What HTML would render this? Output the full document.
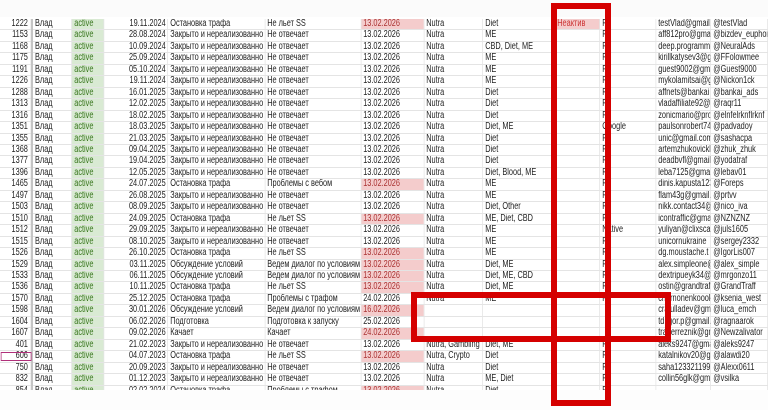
<!DOCTYPE html>
<html><head><meta charset="utf-8"><style>
body{margin:0;width:768px;height:410px;overflow:hidden;background:#fff;font-family:"Liberation Sans",Arial,sans-serif;font-size:9.8px;color:#222;position:relative}
table{position:absolute;left:0;top:19px;border-collapse:collapse;table-layout:fixed;width:1024px;transform:scaleX(0.75);transform-origin:0 0}
td{height:10.45px;padding:0 2.5px;border-right:1px solid #e4e4e4;border-bottom:1px solid #e4e4e4;white-space:nowrap;overflow:hidden;line-height:10.45px}
td.n{text-align:right;border-right:3px solid #c4c4c4;padding-right:4px}
td.g{background:#d9ead3;color:#38761d}
td.d{text-align:right}
td.p{background:#f4cccc;color:#a33}
.top{position:absolute;left:0;top:0;width:768px;height:17px;background:#fbfbfb}
.bot{position:absolute;left:0;top:390px;width:768px;height:20px;background:#fdfdfd}
.r{position:absolute;border:6px solid #d50000;box-sizing:border-box}
.sel{outline:1.5px solid #b0307a;outline-offset:-2px}
</style></head><body>
<div class="top"></div>
<table>
<colgroup><col style="width:42.7px"><col style="width:53.3px"><col style="width:42.7px"><col style="width:85.3px"><col style="width:129.3px"><col style="width:128px"><col style="width:84px"><col style="width:78.7px"><col style="width:96px"><col style="width:60px"><col style="width:74.7px"><col style="width:73.3px"><col style="width:76px"></colgroup>
<tr><td class="n">1222</td><td>Влад</td><td class="g">active</td><td class="d">19.11.2024</td><td>Остановка трафа</td><td>Не льет SS</td><td class="p">13.02.2026</td><td>Nutra</td><td>Diet</td><td class="p" style="color:#c33">Неактив</td><td>F</td><td>testVlad@gmail.</td><td>@testVlad</td></tr>
<tr><td class="n">1153</td><td>Влад</td><td class="g">active</td><td class="d">28.08.2024</td><td>Закрыто и нереализованно</td><td>Не отвечает</td><td>13.02.2026</td><td>Nutra</td><td>ME</td><td></td><td>F</td><td>aff812pro@gmai</td><td>@bizdev_euphor</td></tr>
<tr><td class="n">1168</td><td>Влад</td><td class="g">active</td><td class="d">10.09.2024</td><td>Закрыто и нереализованно</td><td>Не отвечает</td><td>13.02.2026</td><td>Nutra</td><td>CBD, Diet, ME</td><td></td><td>F</td><td>deep.programme</td><td>@NeuralAds</td></tr>
<tr><td class="n">1175</td><td>Влад</td><td class="g">active</td><td class="d">25.09.2024</td><td>Закрыто и нереализованно</td><td>Не отвечает</td><td>13.02.2026</td><td>Nutra</td><td>ME</td><td></td><td>F</td><td>kirillkatysev3@g</td><td>@FFolowmee</td></tr>
<tr><td class="n">1191</td><td>Влад</td><td class="g">active</td><td class="d">05.10.2024</td><td>Закрыто и нереализованно</td><td>Не отвечает</td><td>13.02.2026</td><td>Nutra</td><td>ME</td><td></td><td>F</td><td>guest9002@gma</td><td>@Guest9000</td></tr>
<tr><td class="n">1226</td><td>Влад</td><td class="g">active</td><td class="d">19.11.2024</td><td>Закрыто и нереализованно</td><td>Не отвечает</td><td>13.02.2026</td><td>Nutra</td><td>ME</td><td></td><td>F</td><td>mykolamitsai@g</td><td>@Nickon1ck</td></tr>
<tr><td class="n">1288</td><td>Влад</td><td class="g">active</td><td class="d">16.01.2025</td><td>Закрыто и нереализованно</td><td>Не отвечает</td><td>13.02.2026</td><td>Nutra</td><td>Diet</td><td></td><td>F</td><td>affnets@bankai</td><td>@bankai_ads</td></tr>
<tr><td class="n">1313</td><td>Влад</td><td class="g">active</td><td class="d">12.02.2025</td><td>Закрыто и нереализованно</td><td>Не отвечает</td><td>13.02.2026</td><td>Nutra</td><td>Diet</td><td></td><td>F</td><td>vladaffiliate92@</td><td>@raqr11</td></tr>
<tr><td class="n">1316</td><td>Влад</td><td class="g">active</td><td class="d">18.02.2025</td><td>Закрыто и нереализованно</td><td>Не отвечает</td><td>13.02.2026</td><td>Nutra</td><td>Diet</td><td></td><td>F</td><td>zonicmario@pro</td><td>@elnfelrknflrknf</td></tr>
<tr><td class="n">1351</td><td>Влад</td><td class="g">active</td><td class="d">18.03.2025</td><td>Закрыто и нереализованно</td><td>Не отвечает</td><td>13.02.2026</td><td>Nutra</td><td>Diet, ME</td><td></td><td>Google</td><td>paulsonrobert74</td><td>@padvadoy</td></tr>
<tr><td class="n">1355</td><td>Влад</td><td class="g">active</td><td class="d">21.03.2025</td><td>Закрыто и нереализованно</td><td>Не отвечает</td><td>13.02.2026</td><td>Nutra</td><td>Diet</td><td></td><td>F</td><td>unic@gmail.com</td><td>@sashacpa</td></tr>
<tr><td class="n">1368</td><td>Влад</td><td class="g">active</td><td class="d">09.04.2025</td><td>Закрыто и нереализованно</td><td>Не отвечает</td><td>13.02.2026</td><td>Nutra</td><td>Diet</td><td></td><td>F</td><td>artemzhukovickl</td><td>@zhuk_zhuk</td></tr>
<tr><td class="n">1377</td><td>Влад</td><td class="g">active</td><td class="d">19.04.2025</td><td>Закрыто и нереализованно</td><td>Не отвечает</td><td>13.02.2026</td><td>Nutra</td><td>Diet</td><td></td><td>F</td><td>deadbvfl@gmail</td><td>@yodatraf</td></tr>
<tr><td class="n">1396</td><td>Влад</td><td class="g">active</td><td class="d">12.05.2025</td><td>Закрыто и нереализованно</td><td>Не отвечает</td><td>13.02.2026</td><td>Nutra</td><td>Diet, Blood, ME</td><td></td><td>F</td><td>leba7125@gmai</td><td>@lebav01</td></tr>
<tr><td class="n">1465</td><td>Влад</td><td class="g">active</td><td class="d">24.07.2025</td><td>Остановка трафа</td><td>Проблемы с вебом</td><td class="p">13.02.2026</td><td>Nutra</td><td>ME</td><td></td><td>F</td><td>dinis.kapusta123</td><td>@Foreps</td></tr>
<tr><td class="n">1497</td><td>Влад</td><td class="g">active</td><td class="d">26.08.2025</td><td>Закрыто и нереализованно</td><td>Не отвечает</td><td>13.02.2026</td><td>Nutra</td><td>ME</td><td></td><td>F</td><td>flam43g@gmail.</td><td>@prtvv</td></tr>
<tr><td class="n">1503</td><td>Влад</td><td class="g">active</td><td class="d">08.09.2025</td><td>Закрыто и нереализованно</td><td>Не отвечает</td><td>13.02.2026</td><td>Nutra</td><td>Diet, Other</td><td></td><td>F</td><td>nikk.contact34@</td><td>@nico_iva</td></tr>
<tr><td class="n">1510</td><td>Влад</td><td class="g">active</td><td class="d">24.09.2025</td><td>Остановка трафа</td><td>Не льет SS</td><td class="p">13.02.2026</td><td>Nutra</td><td>ME, Diet, CBD</td><td></td><td>F</td><td>icontraffic@gma</td><td>@NZNZNZ</td></tr>
<tr><td class="n">1512</td><td>Влад</td><td class="g">active</td><td class="d">29.09.2025</td><td>Закрыто и нереализованно</td><td>Не отвечает</td><td>13.02.2026</td><td>Nutra</td><td>ME</td><td></td><td>Native</td><td>yuliyan@clixscal</td><td>@juls1605</td></tr>
<tr><td class="n">1515</td><td>Влад</td><td class="g">active</td><td class="d">08.10.2025</td><td>Закрыто и нереализованно</td><td>Не отвечает</td><td>13.02.2026</td><td>Nutra</td><td>ME</td><td></td><td>F</td><td>unicornukraine</td><td>@sergey2332</td></tr>
<tr><td class="n">1526</td><td>Влад</td><td class="g">active</td><td class="d">26.10.2025</td><td>Остановка трафа</td><td>Не льет SS</td><td class="p">13.02.2026</td><td>Nutra</td><td>ME</td><td></td><td>F</td><td>dg.moustache.t</td><td>@IgorLis007</td></tr>
<tr><td class="n">1529</td><td>Влад</td><td class="g">active</td><td class="d">03.11.2025</td><td>Обсуждение условий</td><td>Ведем диалог по условиям</td><td class="p">13.02.2026</td><td>Nutra</td><td>Diet, ME</td><td></td><td>F</td><td>alex.simpleone@</td><td>@alex_simple</td></tr>
<tr><td class="n">1533</td><td>Влад</td><td class="g">active</td><td class="d">06.11.2025</td><td>Обсуждение условий</td><td>Ведем диалог по условиям</td><td class="p">13.02.2026</td><td>Nutra</td><td>Diet, ME, CBD</td><td></td><td>F</td><td>dextripueyk34@</td><td>@mrgonzo11</td></tr>
<tr><td class="n">1536</td><td>Влад</td><td class="g">active</td><td class="d">10.11.2025</td><td>Остановка трафа</td><td>Не льет SS</td><td class="p">13.02.2026</td><td>Nutra</td><td>Diet, ME</td><td></td><td>F</td><td>ostin@grandtraf</td><td>@GrandTraff</td></tr>
<tr><td class="n">1570</td><td>Влад</td><td class="g">active</td><td class="d">25.12.2025</td><td>Остановка трафа</td><td>Проблемы с трафом</td><td>24.02.2026</td><td>Nutra</td><td>ME</td><td></td><td>F</td><td>chernonenkoook</td><td>@ksenia_west</td></tr>
<tr><td class="n">1598</td><td>Влад</td><td class="g">active</td><td class="d">30.01.2026</td><td>Обсуждение условий</td><td>Ведем диалог по условиям</td><td class="p">16.02.2026</td><td></td><td></td><td></td><td></td><td>cralulladev@gm</td><td>@luca_emch</td></tr>
<tr><td class="n">1604</td><td>Влад</td><td class="g">active</td><td class="d">06.02.2026</td><td>Подготовка</td><td>Подготовка к запуску</td><td>25.02.2026</td><td></td><td></td><td></td><td></td><td>td.igor.p@gmail.</td><td>@ragnaarok</td></tr>
<tr><td class="n">1607</td><td>Влад</td><td class="g">active</td><td class="d">09.02.2026</td><td>Качает</td><td>Качает</td><td class="p">24.02.2026</td><td></td><td></td><td></td><td></td><td>traderreznik@gm</td><td>@Newzalivator</td></tr>
<tr><td class="n">401</td><td>Влад</td><td class="g">active</td><td class="d">21.02.2023</td><td>Закрыто и нереализованно</td><td>Не отвечает</td><td>13.02.2026</td><td>Nutra, Gambling</td><td>Diet, ME</td><td></td><td>F</td><td>aleks9247@gma</td><td>@aleks9247</td></tr>
<tr><td class="n sel">606</td><td>Влад</td><td class="g">active</td><td class="d">04.07.2023</td><td>Остановка трафа</td><td>Не льет SS</td><td class="p">13.02.2026</td><td>Nutra, Crypto</td><td>Diet</td><td></td><td>F</td><td>katalnikov20@g</td><td>@alawdi20</td></tr>
<tr><td class="n">750</td><td>Влад</td><td class="g">active</td><td class="d">20.09.2023</td><td>Закрыто и нереализованно</td><td>Не отвечает</td><td>13.02.2026</td><td>Nutra</td><td>Diet</td><td></td><td>F</td><td>saha123321199</td><td>@Alexx0611</td></tr>
<tr><td class="n">832</td><td>Влад</td><td class="g">active</td><td class="d">01.12.2023</td><td>Закрыто и нереализованно</td><td>Не отвечает</td><td>13.02.2026</td><td>Nutra</td><td>ME, Diet</td><td></td><td>F</td><td>collin56glk@gma</td><td>@vsilka</td></tr>
<tr><td class="n">854</td><td>Влад</td><td class="g">active</td><td class="d">02.02.2024</td><td>Остановка трафа</td><td>Проблемы с трафом</td><td class="p">13.02.2026</td><td>Nutra</td><td>Diet</td><td></td><td>F</td><td></td><td></td></tr>
</table>
<div class="bot"></div>
<div class="r" style="left:551px;top:3px;width:60px;height:403px"></div>
<div class="r" style="left:411px;top:292px;width:260px;height:50px"></div>
</body></html>
